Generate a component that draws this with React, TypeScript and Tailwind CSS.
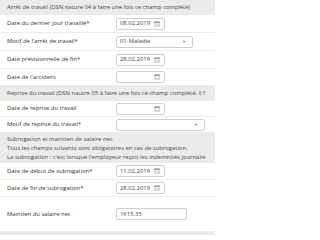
import React from "react";

function CalendarIcon() {
  return (
    <svg width="6" height="6" viewBox="0 0 12 12" className="shrink-0">
      <rect x="0.5" y="1.5" width="11" height="10" rx="1" fill="none" stroke="#9a9a9a" strokeWidth="1" />
      <rect x="0.5" y="1.5" width="11" height="2.5" fill="#9a9a9a" />
      <rect x="3" y="0" width="1.2" height="3" fill="#9a9a9a" />
      <rect x="7.8" y="0" width="1.2" height="3" fill="#9a9a9a" />
      <g fill="#b0b0b0">
        <rect x="2" y="5.5" width="2" height="1.5" />
        <rect x="5" y="5.5" width="2" height="1.5" />
        <rect x="8" y="5.5" width="2" height="1.5" />
        <rect x="2" y="8.3" width="2" height="1.5" />
        <rect x="5" y="8.3" width="2" height="1.5" />
        <rect x="8" y="8.3" width="2" height="1.5" />
      </g>
    </svg>
  );
}

function DateInput({ value }: { value?: string }) {
  return (
    <div className="flex h-[12px] w-[49px] items-center justify-between rounded-[2px] border border-[#cfcfcf] bg-white pl-[3px] pr-[4px]">
      <span className="text-[#444]">{value}</span>
      <CalendarIcon />
    </div>
  );
}

function SelectInput({ value, width }: { value?: string; width: string }) {
  return (
    <div className={`flex h-[12px] items-center justify-between rounded-[2px] border border-[#cfcfcf] bg-white pl-[3px] pr-[6px] ${width}`}>
      <span className="text-[#444]">{value}</span>
      <span className="text-[4px] text-[#777]">▼</span>
    </div>
  );
}

function Row({ label, children, height = "h-[18px]" }: { label: string; children?: React.ReactNode; height?: string }) {
  return (
    <div className={`flex items-center border-b border-[#ececec] ${height}`}>
      <div className="w-[116px] shrink-0 pl-[7px] text-[#333]">{label}</div>
      {children}
    </div>
  );
}

function Header({ children, height = "h-[15px]" }: { children: React.ReactNode; height?: string }) {
  return (
    <div className={`flex items-center overflow-hidden whitespace-nowrap bg-[#ebebeb] pl-[7px] text-[#4a4a4a] ${height}`}>
      {children}
    </div>
  );
}

export default function App() {
  return (
    <div className="h-[235px] w-[215px] overflow-hidden bg-white text-[5.9px] leading-[9px] [font-family:'Open_Sans',sans-serif]">
      <Header>Arrêt de travail (DSN nature 04 à faire une fois ce champ complété)</Header>
      <Row label="Date du dernier jour travaillé*">
        <DateInput value="08.02.2019" />
      </Row>
      <Row label="Motif de l'arrêt de travail*">
        <SelectInput value="01-Maladie" width="w-[77px]" />
      </Row>
      <Row label="Date prévisionnelle de fin*">
        <DateInput value="28.02.2019" />
      </Row>
      <Row label="Date de l'accident" height="h-[17px]">
        <DateInput />
      </Row>
      <Header height="h-[15px]">
        Reprise du travail (DSN nautre 05 à faire une fois ce champ complété, il f
      </Header>
      <Row label="Date de reprise du travail" height="h-[16px]">
        <DateInput />
      </Row>
      <Row label="Motif de reprise du travail*" height="h-[16px]">
        <SelectInput width="w-[89px]" />
      </Row>
      <div className="flex h-[30px] flex-col justify-center overflow-hidden whitespace-nowrap bg-[#ebebeb] pl-[7px] text-[#4a4a4a]">
        <div>Subrogation et maintien de salaire net.</div>
        <div>Tous les champs suivants sont obligatoires en cas de subrogation.</div>
        <div>La subrogation : c'est lorsque l'employeur reçoit les indemnités journalie</div>
      </div>
      <Row label="Date de début de subrogation*" height="h-[17px]">
        <DateInput value="11.02.2019" />
      </Row>
      <Row label="Date de fin de subrogation*" height="h-[17px]">
        <DateInput value="28.02.2019" />
      </Row>
      <Row label="Maintien du salaire net" height="h-[35px]">
        <div className="flex h-[12px] w-[71px] items-center rounded-[2px] border border-[#cfcfcf] bg-white pl-[3px] text-[#444]">
          1615.35
        </div>
      </Row>
      <div className="h-[3px] bg-[#ebebeb]" />
    </div>
  );
}
